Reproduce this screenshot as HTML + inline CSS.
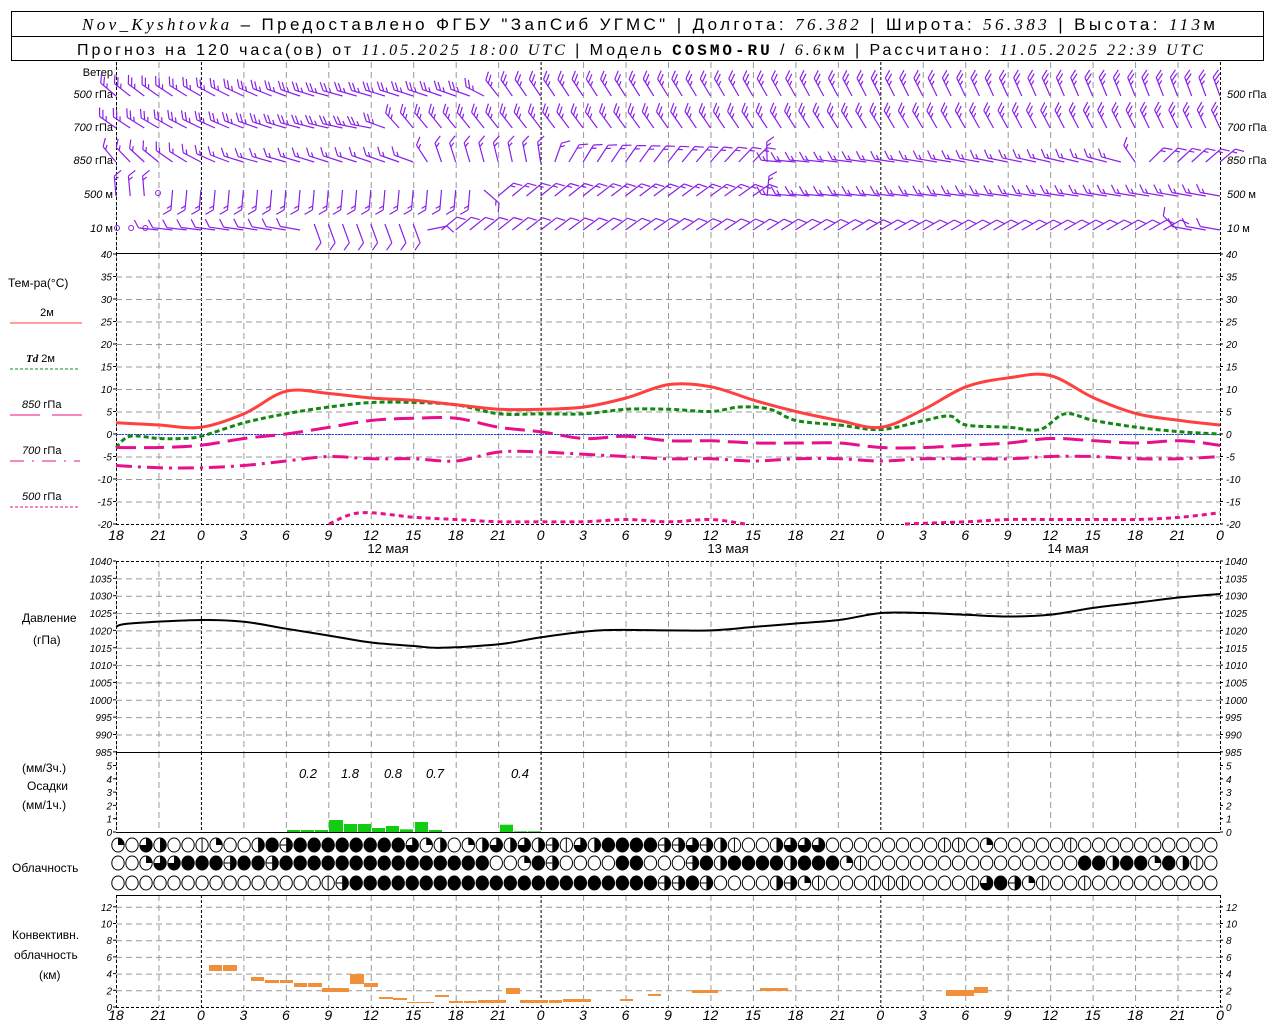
<!DOCTYPE html>
<html><head><meta charset="utf-8">
<style>
html,body{margin:0;padding:0;background:#fff;width:1280px;height:1024px;overflow:hidden}
svg{display:block}
.s{font-family:"Liberation Sans","DejaVu Sans",sans-serif;font-size:12px;fill:#000}
.n{font-family:"Liberation Sans",sans-serif;font-style:italic;font-size:10px;fill:#000}
</style></head><body>
<svg id="g" width="1280" height="1024" viewBox="0 0 1280 1024" xmlns="http://www.w3.org/2000/svg">
<rect x="0" y="0" width="1280" height="1024" fill="#fff"/>
<rect x="11.5" y="11.5" width="1252" height="49" fill="none" stroke="#000"/>
<line x1="11" y1="36.5" x2="1264" y2="36.5" stroke="#000"/>
<text x="82" y="30" class="s" style="font-size:17px" textLength="1133" lengthAdjust="spacing"><tspan style="font-family:'Liberation Serif',serif;font-style:italic">Nov_Kyshtovka</tspan> – Предоставлено ФГБУ "ЗапСиб УГМС" | Долгота: <tspan style="font-family:'Liberation Serif',serif;font-style:italic">76.382</tspan> | Широта: <tspan style="font-family:'Liberation Serif',serif;font-style:italic">56.383</tspan> | Высота: <tspan style="font-family:'Liberation Serif',serif;font-style:italic">113</tspan>м</text>
<text x="77" y="55" class="s" style="font-size:16px" textLength="1126" lengthAdjust="spacing">Прогноз на 120 часа(ов) от <tspan style="font-family:'Liberation Serif',serif;font-style:italic">11.05.2025 18:00 UTC</tspan> | Модель <tspan style="font-family:'Liberation Mono',monospace;font-weight:bold">COSMO-RU</tspan> / <tspan style="font-family:'Liberation Serif',serif;font-style:italic">6.6</tspan>км | Рассчитано: <tspan style="font-family:'Liberation Serif',serif;font-style:italic">11.05.2025 22:39 UTC</tspan></text>
<g id="dyn"></g>
</svg>
<script>
(function(){
var NS="http://www.w3.org/2000/svg",G=document.getElementById('dyn');
function el(t,a,txt){var e=document.createElementNS(NS,t);for(var k in a)e.setAttribute(k,a[k]);if(txt!=null)e.textContent=txt;G.appendChild(e);return e;}
var X0=116,X1=1220,PH=(X1-X0)/78;
function xh(h){return X0+h*PH;}
var panels=[[62,253],[253,524],[561,752],[752,832],[895,1007]];
for(var k=0;k<=26;k++){var x=xh(k*3)+0.5;var midnight=(k%8==2);
 panels.forEach(function(p){el('line',{x1:x,y1:p[0],x2:x,y2:p[1],stroke:midnight?'#000':'#999','stroke-dasharray':midnight?'3,2':'6,4','stroke-width':1});});}
function hgrid(y){el('line',{x1:X0,y1:y+0.5,x2:X1,y2:y+0.5,stroke:'#999','stroke-dasharray':'6,4'});}
panels.forEach(function(p){
 el('line',{x1:X0+0.5,y1:p[0],x2:X0+0.5,y2:p[1],stroke:'#000','stroke-dasharray':'3,2'});
 el('line',{x1:X1+0.5,y1:p[0],x2:X1+0.5,y2:p[1],stroke:'#000','stroke-dasharray':'3,2'});});
function ty(t){return 254+(40-t)*4.5;}
for(var t=35;t>=-15;t-=5)hgrid(ty(t));
el('line',{x1:X0,y1:253.5,x2:X1,y2:253.5,stroke:'#000'});
el('line',{x1:X0,y1:524.5,x2:X1,y2:524.5,stroke:'#000','stroke-dasharray':'3,2'});
for(var t=40;t>=-20;t-=5){var y=ty(t)+4;
 el('text',{x:112,y:y,'text-anchor':'end','class':'n'},String(t));
 el('text',{x:1226,y:y,'class':'n'},String(t));
 el('line',{x1:X0-3,y1:ty(t),x2:X0,y2:ty(t),stroke:'#000'});el('line',{x1:X1,y1:ty(t),x2:X1+3,y2:ty(t),stroke:'#000'});}
el('line',{x1:X0,y1:434.5,x2:X1,y2:434.5,stroke:'#2040ff','stroke-dasharray':'2,1'});
var hrs=[18,21,0,3,6,9,12,15,18,21,0,3,6,9,12,15,18,21,0,3,6,9,12,15,18,21,0];
hrs.forEach(function(v,i){var x=xh(i*3);
 el('text',{x:x,y:540,'text-anchor':'middle','class':'n',style:'font-size:14px'},String(v));
 el('text',{x:x,y:1020,'text-anchor':'middle','class':'n',style:'font-size:14px'},String(v));});
[[388,'12 мая'],[728,'13 мая'],[1068,'14 мая']].forEach(function(d){el('text',{x:d[0],y:553,'text-anchor':'middle','class':'s',style:'font-size:13px'},d[1]);});
function poly(pts,fy,st){var P=pts.map(function(p){return [p[0],fy(p[1])];});
 var d='M'+P[0][0]+','+P[0][1].toFixed(1);
 for(var i=0;i<P.length-1;i++){var p0=P[i-1]||P[i],p1=P[i],p2=P[i+1],p3=P[i+2]||p2;
  var c1x=p1[0]+(p2[0]-p0[0])/6,c1y=p1[1]+(p2[1]-p0[1])/6,c2x=p2[0]-(p3[0]-p1[0])/6,c2y=p2[1]-(p3[1]-p1[1])/6;
  d+=' C'+c1x.toFixed(1)+','+c1y.toFixed(1)+' '+c2x.toFixed(1)+','+c2y.toFixed(1)+' '+p2[0]+','+p2[1].toFixed(1);}
 var a={d:d,fill:'none'};for(var k in st)a[k]=st[k];el('path',a);}
poly([[116,-3],[130,-0.5],[159,-1],[180,-1],[201,-0.5],[244,2.5],[286,4.5],[329,6],[371,7],[414,7],[456,6.5],[499,4.5],[541,4.5],[584,4.5],[626,5.5],[669,5.5],[711,5],[740,6],[770,5.5],[796,3],[839,2],[881,1],[924,3],[950,4],[966,2],[1009,1.5],[1040,1],[1065,4.5],[1094,3],[1137,1.5],[1180,0.5],[1220,0]],ty,{stroke:'#118811','stroke-width':3,'stroke-dasharray':'5,3'});
poly([[116,2.5],[159,2],[201,1.5],[244,4.5],[286,9.5],[329,9],[371,8],[414,7.5],[456,6.5],[499,5.5],[541,5.5],[584,6],[626,8],[669,11],[711,10.5],[754,7.5],[796,5],[839,3],[881,1.5],[924,5.5],[966,10.5],[1009,12.5],[1050,13],[1094,8],[1137,4.5],[1180,3],[1220,2]],ty,{stroke:'#ff4040','stroke-width':3});
poly([[116,-3],[159,-3],[201,-2.5],[244,-1],[286,0],[329,1.5],[371,3],[414,3.5],[456,3.5],[499,1.5],[541,0.5],[584,-1],[626,-0.5],[669,-1.5],[711,-1.5],[754,-2],[796,-2],[839,-2],[881,-3],[924,-3],[966,-2.5],[1009,-2],[1050,-1],[1094,-1.5],[1137,-2],[1180,-1.5],[1220,-2.5]],ty,{stroke:'#e8108a','stroke-width':3,'stroke-dasharray':'20,8'});
poly([[116,-7],[159,-7.5],[201,-7.5],[244,-7],[286,-6],[329,-5],[371,-5.5],[414,-5.5],[456,-6],[499,-4],[541,-4],[584,-4.5],[626,-5],[669,-5.5],[711,-5.5],[754,-6],[796,-5.5],[839,-5.5],[881,-6],[924,-5.5],[966,-5.5],[1009,-5.5],[1050,-5],[1094,-5],[1137,-5.5],[1180,-5.5],[1220,-5]],ty,{stroke:'#e8108a','stroke-width':3,'stroke-dasharray':'16,6,3,6'});
poly([[329,-20],[360,-17.5],[414,-18.5],[456,-19],[499,-19.5],[541,-19.5],[584,-19.5],[626,-19],[669,-19.5],[711,-19],[745,-20]],ty,{stroke:'#e8108a','stroke-width':3,'stroke-dasharray':'5,4'});
poly([[905,-20],[966,-19.5],[1009,-19],[1050,-19],[1094,-19],[1137,-19],[1180,-18.5],[1220,-17.5]],ty,{stroke:'#e8108a','stroke-width':3,'stroke-dasharray':'5,4'});
el('text',{x:8,y:287,'class':'s'},'Тем-ра(°C)');
el('text',{x:47,y:316,'class':'s','text-anchor':'middle',style:'font-size:11px'},'2м');
el('line',{x1:10,y1:323,x2:82,y2:323,stroke:'#ff4040'});
el('text',{x:26,y:362,'class':'s',style:'font-size:11px'}).innerHTML='<tspan font-style="italic" font-weight="bold" font-family="Liberation Serif">Td</tspan>  2м';
el('line',{x1:10,y1:369,x2:80,y2:369,stroke:'#118811','stroke-dasharray':'3,2'});
el('text',{x:22,y:408,'class':'s',style:'font-size:11px'}).innerHTML='<tspan font-style="italic">850</tspan> гПа';
el('line',{x1:10,y1:415,x2:40,y2:415,stroke:'#e8108a'});el('line',{x1:52,y1:415,x2:82,y2:415,stroke:'#e8108a'});
el('text',{x:22,y:454,'class':'s',style:'font-size:11px'}).innerHTML='<tspan font-style="italic">700</tspan> гПа';
el('line',{x1:10,y1:461,x2:80,y2:461,stroke:'#e8108a','stroke-dasharray':'14,8,2,8'});
el('text',{x:22,y:500,'class':'s',style:'font-size:11px'}).innerHTML='<tspan font-style="italic">500</tspan> гПа';
el('line',{x1:10,y1:507,x2:80,y2:507,stroke:'#e8108a','stroke-dasharray':'3,2'});
function py(p){return 561+(1040-p)*3.47;}
for(var p=1035;p>=990;p-=5)hgrid(py(p));
el('line',{x1:X0,y1:561.5,x2:X1,y2:561.5,stroke:'#000','stroke-dasharray':'3,2'});
for(var p=1040;p>=985;p-=5){var y=py(p)+4;el('text',{x:112,y:y,'text-anchor':'end','class':'n'},String(p));el('text',{x:1225,y:y,'class':'n'},String(p));
 el('line',{x1:X0-3,y1:py(p),x2:X0,y2:py(p),stroke:'#000'});el('line',{x1:X1,y1:py(p),x2:X1+3,y2:py(p),stroke:'#000'});}
poly([[116,1021],[130,1022],[201,1023],[244,1022.5],[286,1020.5],[329,1018.5],[371,1016.5],[414,1015.5],[440,1015],[499,1016],[541,1018],[600,1020],[669,1020],[711,1020],[754,1021],[796,1022],[839,1023],[881,1025],[924,1025],[966,1024.5],[1009,1024],[1050,1024.5],[1094,1026.5],[1137,1028],[1180,1029.5],[1220,1030.5]],py,{stroke:'#000','stroke-width':2});
el('text',{x:22,y:622,'class':'s'},'Давление');el('text',{x:33,y:644,'class':'s'},'(гПа)');
el('line',{x1:X0,y1:752.5,x2:X1,y2:752.5,stroke:'#000'});
el('line',{x1:X0,y1:832.5,x2:X1,y2:832.5,stroke:'#000'});
for(var v=0;v<=5;v++){var y=832-v*13.3;el('text',{x:112,y:y+4,'text-anchor':'end','class':'n'},String(v));el('text',{x:1226,y:y+4,'class':'n'},String(v));
 el('line',{x1:X0-3,y1:y,x2:X0,y2:y,stroke:'#000'});el('line',{x1:X1,y1:y,x2:X1+3,y2:y,stroke:'#000'});}
[[287,300,.15],[301,314,.15],[315,328,.15],[329,343,.9],[344,357,.6],[358,371,.6],[372,385,.3],[386,399,.45],[400,413,.2],[415,428,.75],[429,442,.15],[500,513,.55],[514,527,.05],[528,541,.05]].forEach(function(b){var h=b[2]*13.3;el('rect',{x:b[0],y:832-h,width:b[1]-b[0],height:h,fill:'#11cc11'});});
[[308,'0.2'],[350,'1.8'],[393,'0.8'],[435,'0.7'],[520,'0.4']].forEach(function(l){el('text',{x:l[0],y:778,'text-anchor':'middle','class':'n',style:'font-size:13px'},l[1]);});
el('text',{x:22,y:772,'class':'s'},'(мм/3ч.)');el('text',{x:27,y:790,'class':'s'},'Осадки');el('text',{x:22,y:809,'class':'s'},'(мм/1ч.)');
el('text',{x:12,y:872,'class':'s'},'Облачность');
var r1='q0th00vq00hfefffffffftqh0qhththevth0'.slice(0,35)+'ffffeetehv00httt00000000vv0q00000v000000000';
var r2='00qttfffeffefffffffffffffff00qfe00000'.slice(0,35)+'0ff000efhffffhfffqv000000000000000ffhffqfhv';
var r3='000000000000000veffffffffffffffffffff'.slice(0,35)+'ffffeefe0000heqv000vvv0000vtfeqv00v00000000';
function cloud(x,y,c){var r=6.2;
 el('ellipse',{cx:x,cy:y,rx:r,ry:r+0.8,fill:c=='f'?'#000':'#fff',stroke:'#000'});
 var ry=r+0.8;
 if(c=='v')el('line',{x1:x,y1:y-ry,x2:x,y2:y+ry,stroke:'#000'});
 if(c=='q')el('path',{d:'M'+x+','+y+' L'+x+','+(y-ry)+' A'+r+','+ry+' 0 0 1 '+(x+r)+','+y+' Z',fill:'#000'});
 if(c=='h'||c=='e')el('path',{d:'M'+x+','+(y-ry)+' A'+r+','+ry+' 0 0 1 '+x+','+(y+ry)+' Z',fill:'#000'});
 if(c=='e')el('line',{x1:x-r,y1:y,x2:x,y2:y,stroke:'#000'});
 if(c=='t')el('path',{d:'M'+x+','+y+' L'+x+','+(y-ry)+' A'+r+','+ry+' 0 1 1 '+(x-r)+','+y+' Z',fill:'#000'});
}
[[845,r1],[863,r2],[883,r3]].forEach(function(row){for(var i=0;i<79;i++){var c=row[1][i]||'0';cloud(118+i*14.01,row[0],c);}});
function cy(v){return 1007-v*8.35;}
for(var v=2;v<=12;v+=2)hgrid(cy(v));
el('line',{x1:X0,y1:895.5,x2:X1,y2:895.5,stroke:'#000'});
el('line',{x1:X0,y1:1007.5,x2:X1,y2:1007.5,stroke:'#000','stroke-dasharray':'3,2'});
for(var v=0;v<=12;v+=2){var y=cy(v);el('text',{x:112,y:y+4,'text-anchor':'end','class':'n'},String(v));el('text',{x:1226,y:y+4,'class':'n'},String(v));
 el('line',{x1:X0-3,y1:y,x2:X0,y2:y,stroke:'#000'});el('line',{x1:X1,y1:y,x2:X1+3,y2:y,stroke:'#000'});}
el('text',{x:12,y:939,'class':'s'},'Конвективн.');el('text',{x:14,y:959,'class':'s'},'облачность');el('text',{x:39,y:979,'class':'s'},'(км)');
[[209,222,965,971],[223,237,965,971],[251,264,977,981],[265,279,980,983],[280,293,980,983],[294,307,983,987],[308,322,983,987],[322,349,988,992],[350,364,974,984],[364,378,983,987],[379,393,997,999],[393,407,998,1000],[407,434,1002,1003],[435,449,995,997],[449,463,1001,1003],[464,477,1001,1003],[478,506,1000,1003],[506,520,988,994],[520,534,1000,1003],[534,548,1000,1003],[549,562,1000,1003],[563,591,999,1002],[620,633,999,1001],[648,661,994,996],[692,718,990,993],[760,788,988,991],[946,960,990,996],[960,974,990,996],[974,988,987,993]].forEach(function(b){el('rect',{x:b[0],y:b[2],width:b[1]-b[0],height:b[3]-b[2],fill:'#f0903a'});});
[['Ветер',76],['500 гПа',98],['700 гПа',131],['850 гПа',164],['500 м',198],['10  м',232]].forEach(function(l,i){
 var t=el('text',{x:113,y:l[1],'text-anchor':'end','class':'s',style:'font-size:11px'});
 if(i==0)t.textContent=l[0];else{var p=l[0].split(' ');t.innerHTML='<tspan font-style="italic">'+p[0]+'</tspan> '+p.slice(1).join(' ').trim();}
 if(i>0){var t2=el('text',{x:1227,y:l[1],'class':'s',style:'font-size:11px'});t2.innerHTML=t.innerHTML;}});
function interp(kp,x){for(var i=1;i<kp.length;i++){if(x<=kp[i][0]){var a=kp[i-1],b=kp[i];var f=(x-a[0])/(b[0]-a[0]||1);return a[1]+(b[1]-a[1])*f;}}return kp[kp.length-1][1];}
var col='#8a20e8';
function barb(x,y,a,n){var r=a*Math.PI/180,dx=Math.cos(r),dy=Math.sin(r),L=20;var tx=x+dx*L,ty2=y+dy*L;
 var d='M'+x.toFixed(1)+','+y.toFixed(1)+'L'+tx.toFixed(1)+','+ty2.toFixed(1);
 var br=(a+55)*Math.PI/180,bx=Math.cos(br),by=Math.sin(br);
 for(var i=0;i<n;i++){var px=tx-dx*i*4,py2=ty2-dy*i*4;var len=(i==n-1&&n>1)?5:9;d+='M'+px.toFixed(1)+','+py2.toFixed(1)+'l'+(bx*len).toFixed(1)+','+(by*len).toFixed(1);}
 el('path',{d:d,stroke:col,fill:'none','stroke-width':1.2});}
var rows=[
 {y:96,n:3,kp:[[116,-140],[330,-165],[480,-160],[500,-125],[1220,-110]]},
 {y:128,n:3,kp:[[116,-145],[300,-165],[380,-170],[400,-130],[1220,-115]]},
 {y:162,n:2,kp:[[116,-130],[250,-165],[420,-160],[430,-110],[540,-100],[560,-60],[760,-45],[780,-175],[1130,-165],[1145,-45],[1220,-40]]},
 {y:196,n:2,kp:[[116,-95],[160,-95],[170,95],[480,95],[490,-40],[760,-35],[780,-175],[1220,-170]]},
 {y:230,n:1,kp:[[116,-175],[300,-170],[310,70],[420,70],[430,-40],[900,-30],[1170,-30],[1180,-170],[1220,-170]]}];
rows.forEach(function(r,ri){for(var h=0;h<=78;h++){var x=xh(h);
 if(ri==4&&h<3){el('circle',{cx:x+1,cy:228,r:2.5,fill:'none',stroke:col});continue;}
 if(ri==3&&h==3){el('circle',{cx:158,cy:193,r:2.5,fill:'none',stroke:col});continue;}
 var a=interp(r.kp,x);var yy=r.y;if(a>0)yy=r.y-6;
 barb(x,yy,a,r.n);}});
})();
</script>
</body></html>
